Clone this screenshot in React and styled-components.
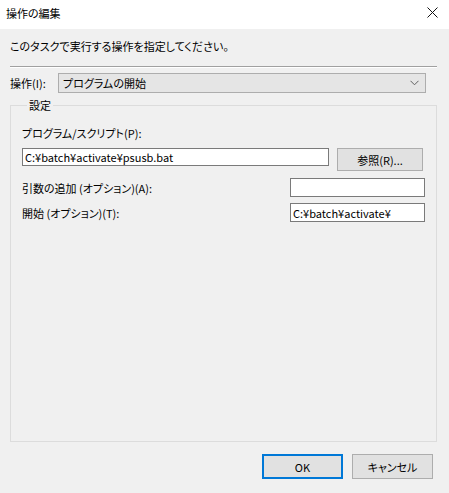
import React from 'react';
import styled, { createGlobalStyle } from 'styled-components';

const GlobalStyle = createGlobalStyle`
  html, body {
    margin: 0;
    padding: 0;
    background: #f0f0f0;
  }
  body {
    font-family: "Noto Sans CJK JP", "Noto Sans", sans-serif;
    font-size: 11px;
    color: #000;
    font-feature-settings: "palt";
  }
`;

const Chevron = () => (
  <svg width="9" height="6" viewBox="0 0 9 6">
    <path d="M0.5 0.8 L4.5 4.8 L8.5 0.8" fill="none" stroke="#606060" strokeWidth="1" />
  </svg>
);

const CloseIcon = () => (
  <svg width="11" height="11" viewBox="0 0 11 11">
    <path d="M0.5 0.5 L10.5 10.5 M10.5 0.5 L0.5 10.5" stroke="#111" strokeWidth="1" />
  </svg>
);

const App = () => (
  <>
    <GlobalStyle />
    <Window>
      <TitleBar>
        <Title>操作の編集</Title>
        <CloseButton><CloseIcon /></CloseButton>
      </TitleBar>
      <Body>
        <Description>このタスクで実行する操作を指定してください。</Description>
        <Separator />
        <ActionRow>
          <Label width="48px">操作(I):</Label>
          <Combo>
            <span>プログラムの開始</span>
            <Chevron />
          </Combo>
        </ActionRow>
        <Group>
          <Legend>設定</Legend>
          <Label>プログラム/スクリプト(P):</Label>
          <ProgramRow>
            <TextBox width="307px" height="18px" value="C:¥batch¥activate¥psusb.bat" readOnly />
            <Button width="86px" height="23px">参照(R)...</Button>
          </ProgramRow>
          <OptionRow top="7px">
            <Label grow>引数の追加 (オプション)(A):</Label>
            <TextBox width="135px" height="19px" value="" readOnly />
          </OptionRow>
          <OptionRow top="6px">
            <Label grow>開始 (オプション)(T):</Label>
            <TextBox width="135px" height="19px" value="C:¥batch¥activate¥" readOnly />
          </OptionRow>
        </Group>
        <Footer>
          <Button width="81px" height="25px" primary>OK</Button>
          <Button width="81px" height="25px">キャンセル</Button>
        </Footer>
      </Body>
    </Window>
  </>
);

const Window = styled.div`
  width: 449px;
  height: 493px;
  display: flex;
  flex-direction: column;
  background: #f0f0f0;
  overflow: hidden;
`;

const TitleBar = styled.div`
  height: 29px;
  flex: none;
  background: #fff;
  display: flex;
  align-items: center;
  justify-content: space-between;
  padding: 0 11px 0 6px;
`;

const Title = styled.div`
  line-height: 16px;
  margin-top: -3px;
`;

const CloseButton = styled.div`
  display: flex;
  align-items: center;
  margin-top: -4px;
`;

const Body = styled.div`
  flex: 1;
  display: flex;
  flex-direction: column;
  padding: 9px 12px 14px 10px;
  min-height: 0;
`;

const Description = styled.div`
  line-height: 16px;
`;

const Separator = styled.div`
  margin-top: 12px;
  height: 0;
  border-top: 1px solid #a0a0a0;
  border-bottom: 1px solid #fff;
`;

const ActionRow = styled.div`
  display: flex;
  align-items: center;
  margin-top: 5px;
  padding-right: 11px;
`;

const Label = styled.div`
  line-height: 16px;
  white-space: nowrap;
  width: ${props => props.width || 'auto'};
  flex: ${props => (props.grow ? '1' : 'none')};
`;

const Combo = styled.div`
  flex: 1;
  height: 20px;
  box-sizing: border-box;
  background: #e5e5e5;
  border: 1px solid #adadad;
  display: flex;
  align-items: center;
  justify-content: space-between;
  padding: 0 6px 0 4px;
  line-height: 16px;
`;

const Group = styled.fieldset`
  flex: 1;
  margin: 4px 0 0;
  padding: 12px 11px 0 11px;
  border: 1px solid #dcdcdc;
  min-width: 0;
  display: flex;
  flex-direction: column;
`;

const Legend = styled.legend`
  margin-left: 5px;
  padding: 0 2px;
  line-height: 16px;
`;

const ProgramRow = styled.div`
  display: flex;
  align-items: flex-start;
  justify-content: space-between;
  margin-top: 7px;
  padding-right: 2px;
`;

const OptionRow = styled.div`
  display: flex;
  align-items: center;
  margin-top: ${props => props.top};
`;

const TextBox = styled.input`
  width: ${props => props.width};
  height: ${props => props.height};
  box-sizing: border-box;
  flex: none;
  border: 1px solid #7a7a7a;
  background: #fff;
  font-family: inherit;
  font-size: 11px;
  font-feature-settings: "palt";
  padding: 0 2px;
  margin: 0;
  outline: none;
  color: #000;
`;

const Button = styled.button`
  width: ${props => props.width};
  height: ${props => props.height};
  box-sizing: border-box;
  flex: none;
  background: #e1e1e1;
  border: ${props => (props.primary ? '2px solid #0078d7' : '1px solid #adadad')};
  font-family: inherit;
  font-size: 11px;
  font-feature-settings: "palt";
  color: #000;
  padding: 0;
  margin: 0;
  line-height: 16px;
`;

const Footer = styled.div`
  display: flex;
  justify-content: flex-end;
  gap: 9px;
  margin-top: 12px;
  padding-right: 4px;
`;

export default App;
